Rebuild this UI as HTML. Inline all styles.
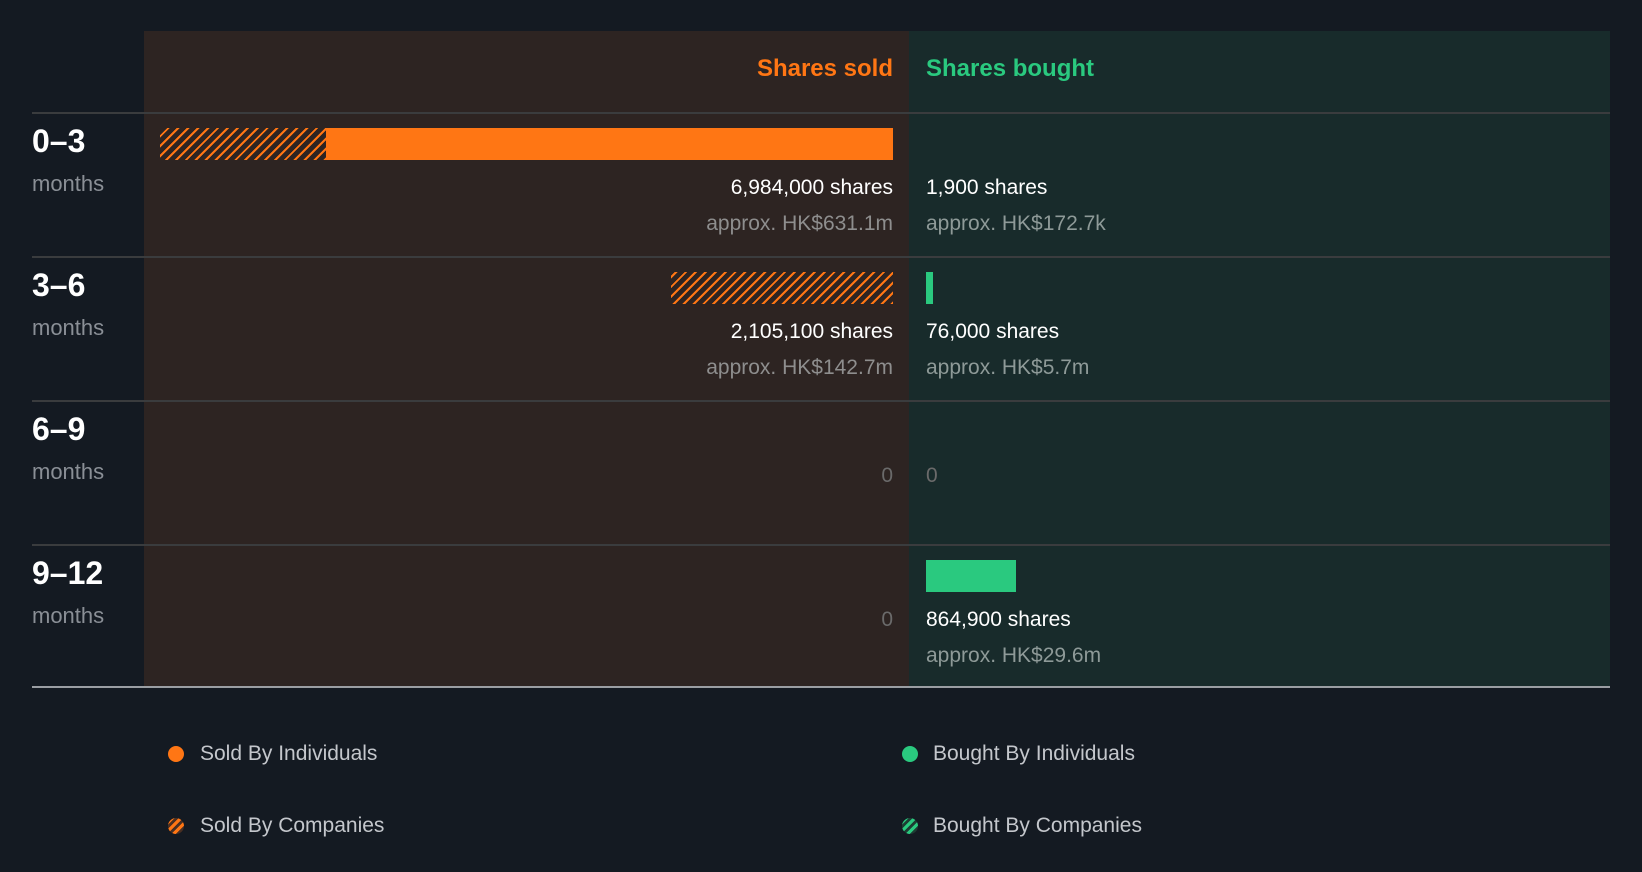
<!DOCTYPE html>
<html><head><meta charset="utf-8"><style>
body{margin:0;width:1642px;height:872px;background:#141a22;font-family:"Liberation Sans",sans-serif;position:relative;overflow:hidden}
div{position:absolute}
.lp{left:144px;width:765px;top:31px;height:656px;background:#2d2422}
.rp{left:909px;width:701px;top:31px;height:656px;background:#182b2b}
.hl{left:32px;width:1578px;height:2px;background:#3a3c3e}
.lab{left:32px;font-weight:bold;font-size:32px;color:#fff}
.mo{left:32px;font-size:22px;color:#8a8f96}
.sr{right:749px;text-align:right;font-size:21px;color:#fff}
.sl{left:926px;font-size:21px;color:#fff}
.ar{right:749px;text-align:right;font-size:21px;color:#8e8e8e}
.al{left:926px;font-size:21px;color:#8e9a98}
.z{font-size:21px;color:#6a6a6a}
.hatch{background:repeating-linear-gradient(-45deg,#ff7614 0 2px,transparent 2px 7px)}
.lg{font-size:21px;color:#c4c7cc}
.dot{width:16px;height:16px;border-radius:50%}
</style></head><body>
<div class="lp"></div><div class="rp"></div>
<div style="right:749px;top:55px;font-size:24px;font-weight:bold;color:#ff7614">Shares sold</div>
<div style="left:926px;top:55px;font-size:24px;font-weight:bold;color:#2ac97f">Shares bought</div>
<div class="hl" style="top:112px"></div>
<div class="hl" style="top:256px"></div>
<div class="hl" style="top:400px"></div>
<div class="hl" style="top:544px"></div>
<div style="left:32px;width:1578px;top:686px;height:2px;background:#9a9ea3"></div>

<div class="lab" style="top:123px">0–3</div><div class="mo" style="top:171px">months</div>
<div class="lab" style="top:267px">3–6</div><div class="mo" style="top:315px">months</div>
<div class="lab" style="top:411px">6–9</div><div class="mo" style="top:459px">months</div>
<div class="lab" style="top:555px">9–12</div><div class="mo" style="top:603px">months</div>

<div class="hatch" style="left:160px;width:166px;top:128px;height:32px"></div>
<div style="left:326px;width:567px;top:128px;height:32px;background:#ff7614"></div>
<div class="sr" style="top:176px">6,984,000 shares</div>
<div class="ar" style="top:212px">approx. HK$631.1m</div>
<div class="sl" style="top:176px">1,900 shares</div>
<div class="al" style="top:212px">approx. HK$172.7k</div>

<div class="hatch" style="left:671px;width:222px;top:272px;height:32px"></div>
<div style="left:926px;width:7px;top:272px;height:32px;background:#2ac97f"></div>
<div class="sr" style="top:320px">2,105,100 shares</div>
<div class="ar" style="top:356px">approx. HK$142.7m</div>
<div class="sl" style="top:320px">76,000 shares</div>
<div class="al" style="top:356px">approx. HK$5.7m</div>

<div class="z" style="right:749px;top:464px">0</div>
<div class="z" style="left:926px;top:464px">0</div>

<div class="z" style="right:749px;top:608px">0</div>
<div style="left:926px;width:90px;top:560px;height:32px;background:#2ac97f"></div>
<div class="sl" style="top:608px">864,900 shares</div>
<div class="al" style="top:644px">approx. HK$29.6m</div>

<div class="dot" style="left:168px;top:746px;background:#ff7614"></div>
<div class="lg" style="left:200px;top:742px">Sold By Individuals</div>
<div class="dot" style="left:168px;top:818px;background:repeating-linear-gradient(-45deg,#ff7614 0 3px,#4a2f22 3px 6px)"></div>
<div class="lg" style="left:200px;top:814px">Sold By Companies</div>
<div class="dot" style="left:902px;top:746px;background:#2ac97f"></div>
<div class="lg" style="left:933px;top:742px">Bought By Individuals</div>
<div class="dot" style="left:902px;top:818px;background:repeating-linear-gradient(-45deg,#2ac97f 0 3px,#1d3d33 3px 6px)"></div>
<div class="lg" style="left:933px;top:814px">Bought By Companies</div>
</body></html>
